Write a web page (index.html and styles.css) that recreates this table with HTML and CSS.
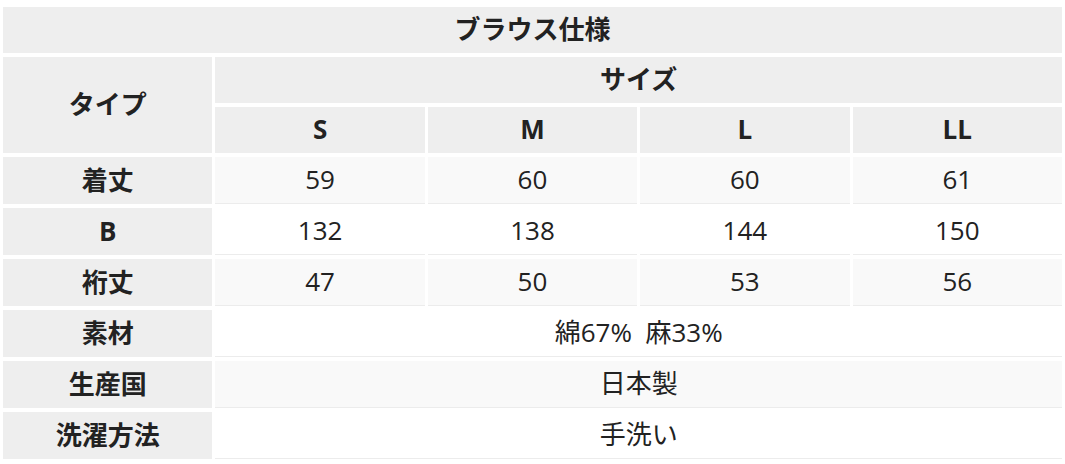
FILE: index.html
```html
<!DOCTYPE html>
<html lang="ja">
<head>
<meta charset="utf-8">
<title>ブラウス仕様</title>
<link rel="stylesheet" href="styles.css">
</head>
<body>
<table class="spec">
  <thead>
    <tr class="row-head"><th colspan="5">ブラウス仕様</th></tr>
    <tr class="row-head"><th rowspan="2">タイプ</th><th colspan="4">サイズ</th></tr>
    <tr class="row-head"><th>S</th><th>M</th><th>L</th><th>LL</th></tr>
  </thead>
  <tbody>
    <tr class="row-data stripe"><th>着丈</th><td>59</td><td>60</td><td>60</td><td>61</td></tr>
    <tr class="row-data"><th>B</th><td>132</td><td>138</td><td>144</td><td>150</td></tr>
    <tr class="row-data stripe"><th>裄丈</th><td>47</td><td>50</td><td>53</td><td>56</td></tr>
    <tr class="row-data"><th>素材</th><td colspan="4">綿67%&nbsp;&nbsp;麻33%</td></tr>
    <tr class="row-data stripe"><th>生産国</th><td colspan="4">日本製</td></tr>
    <tr class="row-data"><th>洗濯方法</th><td colspan="4">手洗い</td></tr>
  </tbody>
</table>
</body>
</html>
```
FILE: styles.css
```css
html, body {
  margin: 0;
  padding: 0;
  background: #ffffff;
}
body {
  font-family: "Open Sans", "Noto Sans CJK JP", sans-serif;
  color: #222222;
}
.spec {
  width: 100%;
  margin-top: 3px;
  border-collapse: separate;
  border-spacing: 3px 4px;
  table-layout: fixed;
  font-size: 26px;
}
.spec th,
.spec td {
  padding: 0;
  text-align: center;
  vertical-align: middle;
  line-height: 1.2;
}
.spec th {
  background: #eeeeee;
  font-weight: 700;
}
.row-head th {
  height: 46px;
}
.row-data th {
  height: 47px;
}
.row-data td {
  height: 46px;
  background: #ffffff;
  border-bottom: 1px solid #ececec;
  font-weight: 400;
}
.row-data.stripe td {
  background: #f9f9f9;
}
```
